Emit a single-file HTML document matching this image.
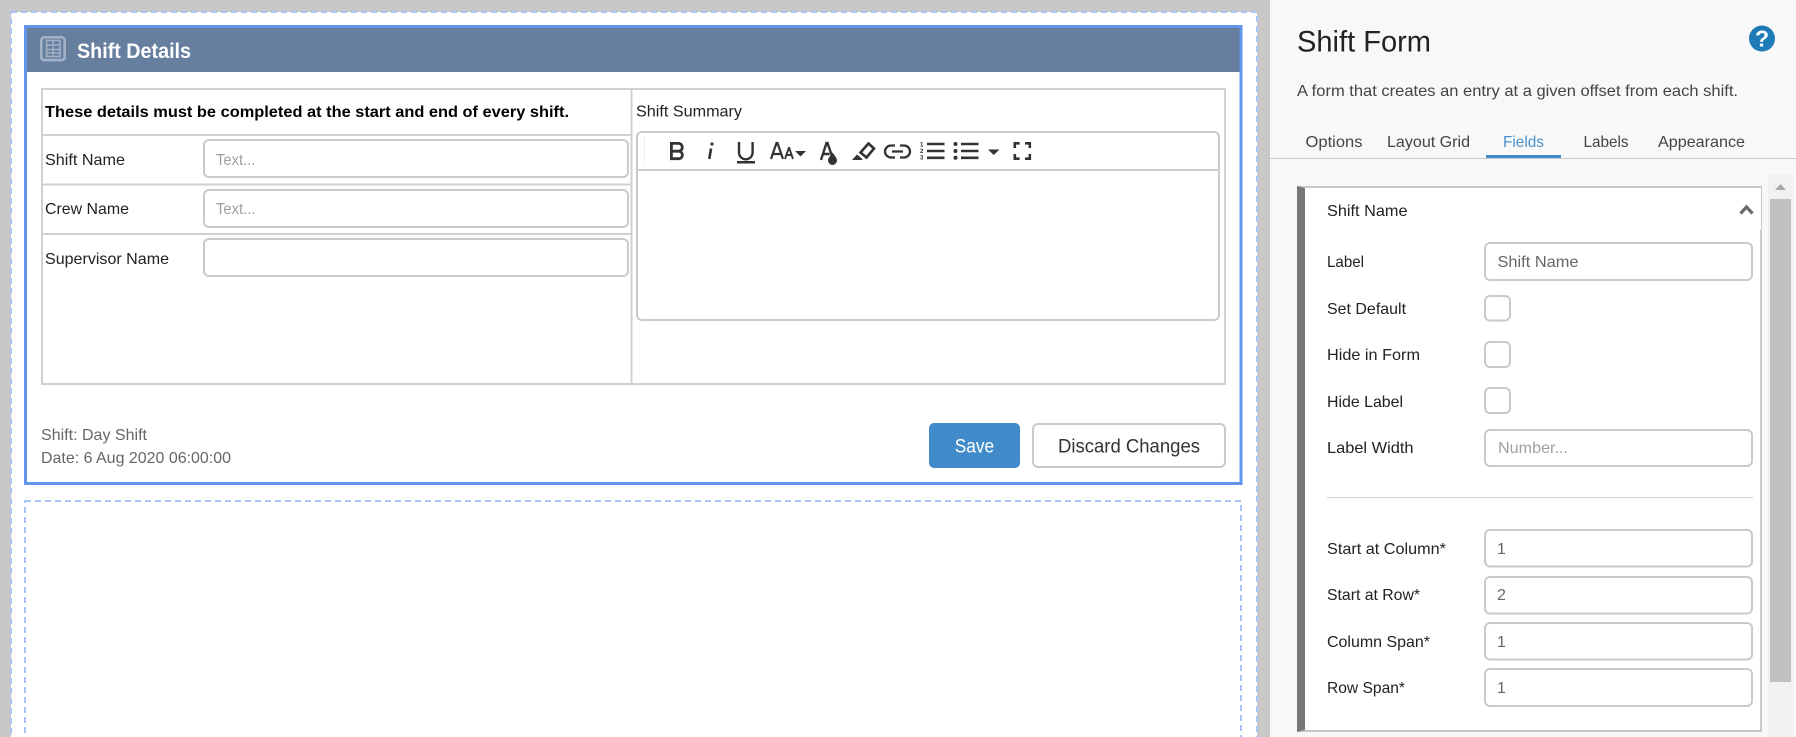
<!DOCTYPE html>
<html><head><meta charset="utf-8"><title>Shift Form</title>
<style>
html,body{margin:0;padding:0;width:1796px;height:737px;overflow:hidden;background:#c8c8c8}
svg{display:block}
text{font-family:"Liberation Sans",sans-serif;font-size:16px;fill:#333}
.i{fill:#fff;stroke:#cacaca;stroke-width:2}
.ph{fill:#a0a0a0}
.v{fill:#666}
.l{fill:#222}
.t{fill:#444}
.ic{fill:none;stroke:#333;stroke-width:2.4}
.f{fill:#333;stroke:none}
</style></head><body>
<svg width="1796" height="737" viewBox="0 0 1796 737" xmlns="http://www.w3.org/2000/svg">
<rect width="1796" height="737" fill="#c8c8c8"/>
<!-- outer canvas -->
<rect x="11" y="12" width="1246" height="740" fill="#fff" stroke="#a9c4f5" stroke-width="2" stroke-dasharray="6 4"/>
<!-- second placeholder -->
<rect x="25" y="501" width="1216" height="260" fill="#fff" stroke="#a9c4f5" stroke-width="2" stroke-dasharray="6 4"/>
<!-- panel -->
<rect x="25.5" y="26.5" width="1215.5" height="457" fill="#fff" stroke="#6495ed" stroke-width="3"/>
<rect x="27" y="28" width="1212.5" height="44" fill="#667f9f"/>
<!-- header icon -->
<rect x="41.300" y="37.300" width="23.400" height="22.800" rx="3" fill="none" stroke="#a3b2c6" stroke-width="2.600"/>
<rect x="46.500" y="40.500" width="13.500" height="16" fill="none" stroke="#a3b2c6" stroke-width="1.600"/>
<path d="M46.500 45h13.500M46.500 49.500h13.500M46.500 53h13.500M53.200 40.500v16" fill="none" stroke="#a3b2c6" stroke-width="1.400"/>
<text x="77" y="58" style="font-size:21px;font-weight:bold;fill:#fff" textLength="114" lengthAdjust="spacingAndGlyphs">Shift Details</text>
<!-- table -->
<rect x="42" y="89" width="1183" height="295" fill="#fff" stroke="#d0d0d0" stroke-width="2"/>
<path d="M631.500 89v295M42 135h589M42 184.500h589M42 234h589" fill="none" stroke="#d0d0d0" stroke-width="2"/>
<text x="45" y="117" style="font-weight:bold;fill:#000" textLength="524" lengthAdjust="spacingAndGlyphs">These details must be completed at the start and end of every shift.</text>
<text x="45" y="165" class="l" textLength="80" lengthAdjust="spacingAndGlyphs">Shift Name</text>
<text x="45" y="214" class="l" textLength="84" lengthAdjust="spacingAndGlyphs">Crew Name</text>
<text x="45" y="264" class="l" textLength="124" lengthAdjust="spacingAndGlyphs">Supervisor Name</text>
<rect class="i" x="204" y="140" width="424" height="37" rx="5"/>
<rect class="i" x="204" y="190" width="424" height="37" rx="5"/>
<rect class="i" x="204" y="239" width="424" height="37" rx="5"/>
<text x="216" y="165" class="ph" textLength="39.500" lengthAdjust="spacingAndGlyphs">Text...</text>
<text x="216" y="214" class="ph" textLength="39.500" lengthAdjust="spacingAndGlyphs">Text...</text>
<text x="636" y="116.500" class="l" textLength="106" lengthAdjust="spacingAndGlyphs">Shift Summary</text>
<!-- editor -->
<rect class="i" x="637" y="132" width="582" height="188" rx="5"/>
<path d="M637 170h582" stroke="#cacaca" stroke-width="2"/>
<path d="M644.500 136v30" stroke="#efefef" stroke-width="1"/>
<!-- B -->
<path class="ic" style="stroke-width:2.800" d="M671.400 143.400h7a3.900 3.900 0 0 1 0 7.800h-7zM671.400 151.200h7.800a3.800 3.800 0 0 1 0 7.500h-7.800z"/>
<!-- i -->
<path class="ic" style="stroke-width:2.600" d="M711 148.500L709.300 159"/><circle class="f" cx="712" cy="144" r="1.600"/>
<!-- U -->
<path class="ic" d="M739 142v10.500a6.800 6.800 0 0 0 13.600 0v-10.500"/><rect class="f" x="737" y="161" width="18" height="2.500"/>
<!-- Aa -->
<path class="ic" style="stroke-width:2.200" d="M771 159L776.500 143h1L783 159M773 154h8"/>
<path class="ic" style="stroke-width:1.900" d="M785 159L788.800 148h.4L793 159M786.500 155h5"/>
<path class="f" d="M795 151h11l-5.500 5.500z"/>
<!-- font colour -->
<path class="ic" d="M821 160L826.500 143h1L832 156M823.500 154h6"/>
<path class="f" d="M832.500 152.500c2 3 4.500 5.500 4.500 8a4.500 4.500 0 0 1-9 0c0-2.500 2.500-5 4.500-8z"/>
<!-- marker -->
<path class="ic" style="stroke-width:2.600" d="M868.500 143.500L874 148.500L866.500 157.500L860.500 152.500z"/>
<path class="f" d="M852 160L857 154.500L863 159.500L861 160z"/>
<!-- link -->
<path class="ic" style="stroke-width:2.300" d="M895 145.500h-4a5.800 5.800 0 0 0 0 12h4M900 145.500h4a5.800 5.800 0 0 1 0 12h-4M892 151.500h11"/>
<!-- ol -->
<text x="920" y="146.500" style="font-size:6px;font-weight:bold">1</text>
<text x="920" y="153" style="font-size:6px;font-weight:bold">2</text>
<text x="920" y="159.500" style="font-size:6px;font-weight:bold">3</text>
<path class="ic" style="stroke-width:2.600" d="M927 144h17.500M927 151h17.500M927 157.800h17.500"/>
<!-- ul -->
<circle class="f" cx="955.500" cy="144" r="2"/><circle class="f" cx="955.500" cy="151" r="2"/><circle class="f" cx="955.500" cy="157.800" r="2"/>
<path class="ic" style="stroke-width:2.600" d="M961 144h17.500M961 151h17.500M961 157.800h17.500"/>
<path class="f" d="M988 149.500h11.500l-5.750 5.500z"/>
<!-- fullscreen -->
<path class="ic" style="stroke-width:2.600" d="M1014.800 148v-4.700h4.800M1025 143.300h4.800v4.700M1029.800 154v4.700h-4.800M1019.600 158.700h-4.800v-4.700"/>
<!-- footer -->
<text x="41" y="440" style="fill:#666" textLength="106" lengthAdjust="spacingAndGlyphs">Shift: Day Shift</text>
<text x="41" y="463" style="fill:#666" textLength="190" lengthAdjust="spacingAndGlyphs">Date: 6 Aug 2020 06:00:00</text>
<rect x="929" y="423" width="91" height="45" rx="5" fill="#428bca"/>
<text x="954.700" y="452.700" style="font-size:19px;fill:#fff" textLength="39.500" lengthAdjust="spacingAndGlyphs">Save</text>
<rect class="i" x="1033" y="424" width="192" height="43" rx="5"/>
<text x="1058" y="452.700" style="font-size:19px;fill:#333" textLength="142" lengthAdjust="spacingAndGlyphs">Discard Changes</text>

<!-- right panel -->
<rect x="1270" y="0" width="526" height="737" fill="#f8f8f8"/>
<text x="1297" y="51.700" style="font-size:30px;fill:#222" textLength="134" lengthAdjust="spacingAndGlyphs">Shift Form</text>
<circle cx="1762" cy="38.500" r="13" fill="#1f7ab8"/>
<text x="1762" y="46.500" text-anchor="middle" style="font-size:23px;font-weight:bold;fill:#fff">?</text>
<text x="1297" y="96" class="t" textLength="441" lengthAdjust="spacingAndGlyphs">A form that creates an entry at a given offset from each shift.</text>
<text x="1305.500" y="147" class="t" textLength="57" lengthAdjust="spacingAndGlyphs">Options</text>
<text x="1387" y="147" class="t" textLength="83" lengthAdjust="spacingAndGlyphs">Layout Grid</text>
<text x="1503" y="147" style="fill:#4a90d0" textLength="41" lengthAdjust="spacingAndGlyphs">Fields</text>
<text x="1583.500" y="147" class="t" textLength="45" lengthAdjust="spacingAndGlyphs">Labels</text>
<text x="1658" y="147" class="t" textLength="87" lengthAdjust="spacingAndGlyphs">Appearance</text>
<rect x="1270" y="158" width="526" height="1" fill="#ccc"/>
<rect x="1486" y="155" width="75" height="3" fill="#428bca"/>
<!-- scrollbar -->
<rect x="1768" y="174" width="25" height="563" fill="#f1f1f1"/>
<path d="M1775 190l5.500-6l5.500 6z" fill="#a8a8a8"/>
<rect x="1770" y="199" width="21" height="483" fill="#c1c1c1"/>
<!-- card -->
<rect x="1305" y="188" width="456" height="543" fill="#fff"/>
<path d="M1297 186H1762V732H1297L1305 730H1760V230H1761V188H1305z" fill="#c8c8c8"/>
<path d="M1297 186L1305 188V730L1297 732z" fill="#777"/>
<text x="1327" y="216" class="l" textLength="80.500" lengthAdjust="spacingAndGlyphs">Shift Name</text>
<path d="M1740.500 213.500L1746.500 207L1752.500 213.500" fill="none" stroke="#6a6a6a" stroke-width="3.200"/>
<text x="1327" y="267" class="l" textLength="37" lengthAdjust="spacingAndGlyphs">Label</text>
<rect class="i" x="1485" y="243" width="267" height="37" rx="5"/>
<text x="1497.500" y="267" class="v" textLength="81" lengthAdjust="spacingAndGlyphs">Shift Name</text>
<text x="1327" y="314" class="l" textLength="79" lengthAdjust="spacingAndGlyphs">Set Default</text>
<rect class="i" x="1485" y="296" width="25" height="24.500" rx="5"/>
<text x="1327" y="360" class="l" textLength="93" lengthAdjust="spacingAndGlyphs">Hide in Form</text>
<rect class="i" x="1485" y="342" width="25" height="25" rx="5"/>
<text x="1327" y="407" class="l" textLength="76" lengthAdjust="spacingAndGlyphs">Hide Label</text>
<rect class="i" x="1485" y="388" width="25" height="25" rx="5"/>
<text x="1327" y="453" class="l" textLength="86.500" lengthAdjust="spacingAndGlyphs">Label Width</text>
<rect class="i" x="1485" y="430" width="267" height="36" rx="5"/>
<text x="1498" y="453" class="ph" textLength="70" lengthAdjust="spacingAndGlyphs">Number...</text>
<rect x="1327" y="497" width="426" height="1" fill="#d0d0d0"/>
<text x="1327" y="554" class="l" textLength="119" lengthAdjust="spacingAndGlyphs">Start at Column*</text>
<rect class="i" x="1485" y="530" width="267" height="36.500" rx="5"/>
<text x="1497" y="554" class="v">1</text>
<text x="1327" y="600" class="l" textLength="93" lengthAdjust="spacingAndGlyphs">Start at Row*</text>
<rect class="i" x="1485" y="577" width="267" height="36.500" rx="5"/>
<text x="1497" y="600" class="v">2</text>
<text x="1327" y="647" class="l" textLength="103" lengthAdjust="spacingAndGlyphs">Column Span*</text>
<rect class="i" x="1485" y="623" width="267" height="36.500" rx="5"/>
<text x="1497" y="647" class="v">1</text>
<text x="1327" y="693" class="l" textLength="78" lengthAdjust="spacingAndGlyphs">Row Span*</text>
<rect class="i" x="1485" y="669" width="267" height="37" rx="5"/>
<text x="1497" y="693" class="v">1</text>
</svg>
</body></html>
